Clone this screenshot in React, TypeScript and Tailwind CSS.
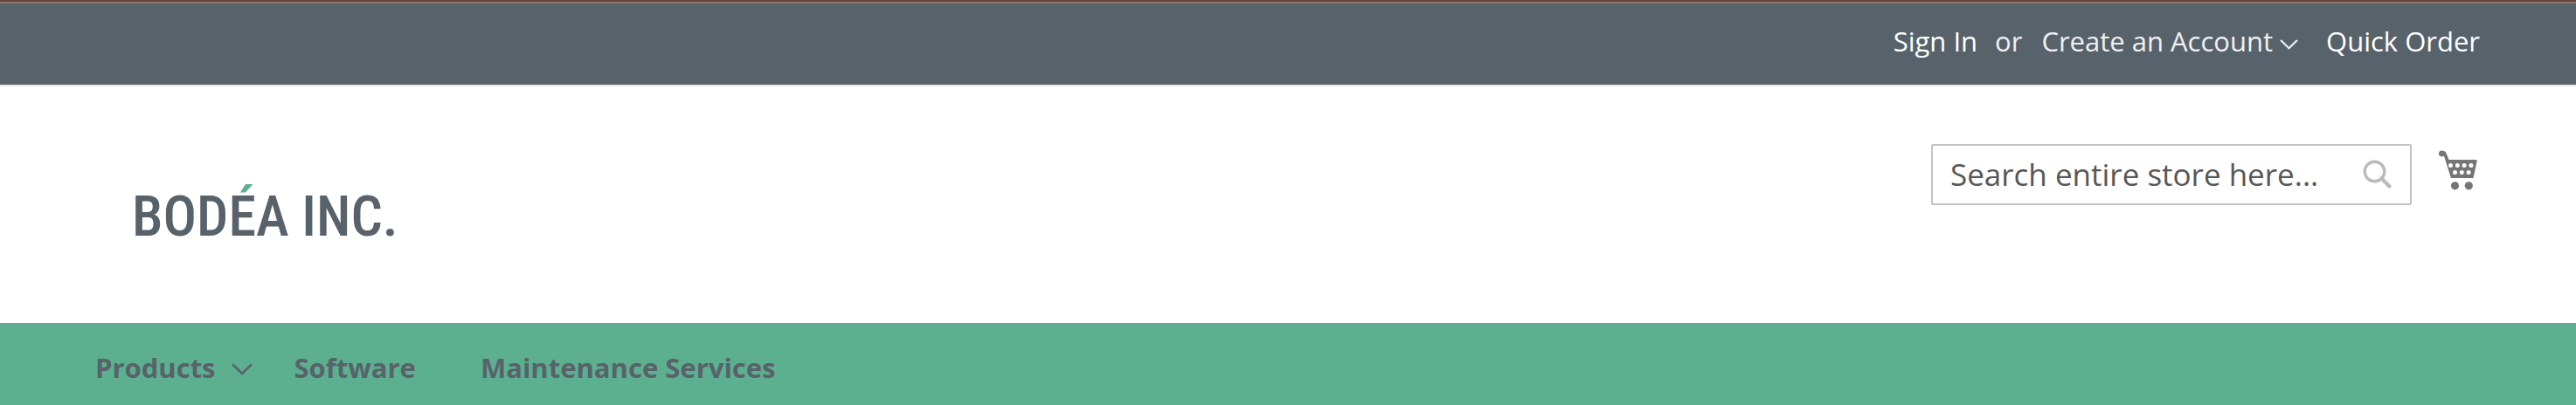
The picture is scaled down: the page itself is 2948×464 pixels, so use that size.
import React from "react";

function Chevron({ className }: { className: string }) {
  return (
    <svg viewBox="0 0 24 14" fill="none" stroke="currentColor" strokeWidth="2.6" className={className} aria-hidden="true">
      <path d="M1 1.2 12 12 23 1.2" />
    </svg>
  );
}

function TopBar() {
  return (
    <div className="border-t-2 border-[#64463f] bg-[#58626a]">
      <div className="flex h-[95px] items-center justify-end border-t-2 border-[#8d7370] pr-[110px] pb-2 text-[31px] leading-[44px] text-white">
        <a href="#sign-in">Sign In</a>
        <span className="ml-5 text-[#f0f0f0]">or</span>
        <button type="button" className="ml-[22px] flex items-center gap-2 text-[#f0f0f0]">
          Create an Account
          <Chevron className="mt-2 h-3 w-[21px]" />
        </button>
        <a href="#quick-order" className="ml-8">Quick Order</a>
      </div>
    </div>
  );
}

function Logo() {
  return (
    <a
      href="#home"
      className="mt-[110px] font-['Roboto_Condensed','Liberation_Sans_Narrow','Liberation_Sans',sans-serif] text-[64px] leading-[80px] font-medium text-[#58626a]"
    >
      BOD
      <span className="bg-linear-to-b from-[#5db08f] from-17% to-[#58626a] to-17% bg-clip-text text-transparent">É</span>
      A INC.
    </a>
  );
}

function CartIcon() {
  return (
    <svg viewBox="0 0 44 46" className="h-[46px] w-11" fill="#757575" aria-hidden="true">
      <path
        fillRule="evenodd"
        d="M3.500 .5C5.500 .5 7.500 1.300 8.500 3.500L11.500 11H42.500Q44 11 43.700 12.500L39.500 32H14L6 7C1 8 0 6 0 4Q0 .5 3.500 .5ZM13.500 15a2.500 2.500 0 1 0 0 5a2.500 2.500 0 1 0 0-5ZM21.300 15a2.500 2.500 0 1 0 0 5a2.500 2.500 0 1 0 0-5ZM29.100 15a2.500 2.500 0 1 0 0 5a2.500 2.500 0 1 0 0-5ZM36.900 15a2.500 2.500 0 1 0 0 5a2.500 2.500 0 1 0 0-5ZM18.500 23a2.500 2.500 0 1 0 0 5a2.500 2.500 0 1 0 0-5ZM26.300 23a2.500 2.500 0 1 0 0 5a2.500 2.500 0 1 0 0-5ZM34.100 23a2.500 2.500 0 1 0 0 5a2.500 2.500 0 1 0 0-5Z"
      />
      <circle cx="18.500" cy="40.800" r="4.600" />
      <circle cx="34.300" cy="40.800" r="4.600" />
    </svg>
  );
}

function Header() {
  return (
    <header className="flex h-[273px] items-start justify-between border-t-2 border-[#e6e8e9] bg-white pl-[151px] pr-[113px]">
      <Logo />
      <div className="mt-[66px] flex items-start">
        <form className="flex h-[70px] w-[550px] items-center rounded-xs border-2 border-[#c2c2c2] px-5">
          <input
            type="search"
            aria-label="Search"
            placeholder="Search entire store here..."
            className="min-w-0 flex-1 bg-transparent text-[35px] leading-[48px] text-[#575757] outline-none placeholder:text-[#575757]"
          />
          <button type="button" aria-label="Search" className="flex">
            <svg viewBox="0 0 36 36" className="h-9 w-9" fill="none" stroke="#bbbbbb" aria-hidden="true">
              <circle cx="15.500" cy="14.500" r="11.300" strokeWidth="3.400" />
              <path d="M23.500 22.500 32.500 31.500" strokeWidth="4.400" strokeLinecap="round" />
            </svg>
          </button>
        </form>
        <a href="#cart" aria-label="My Cart" className="ml-[31px] mt-[7px]">
          <CartIcon />
        </a>
      </div>
    </header>
  );
}

function Nav() {
  return (
    <nav className="flex h-[94px] items-center bg-[#5db08f] px-[109px] pt-2 text-[31px] leading-[44px] font-bold text-[#58626a]">
      <button type="button" className="flex items-center gap-[18px]">
        Products
        <Chevron className="mt-1 h-[14px] w-6" />
      </button>
      <a href="#software" className="ml-12">Software</a>
      <a href="#maintenance" className="ml-[74px]">Maintenance Services</a>
    </nav>
  );
}

export default function App() {
  return (
    <div className="min-h-screen bg-white font-['Open_Sans','Noto_Sans',sans-serif]">
      <TopBar />
      <Header />
      <Nav />
    </div>
  );
}
